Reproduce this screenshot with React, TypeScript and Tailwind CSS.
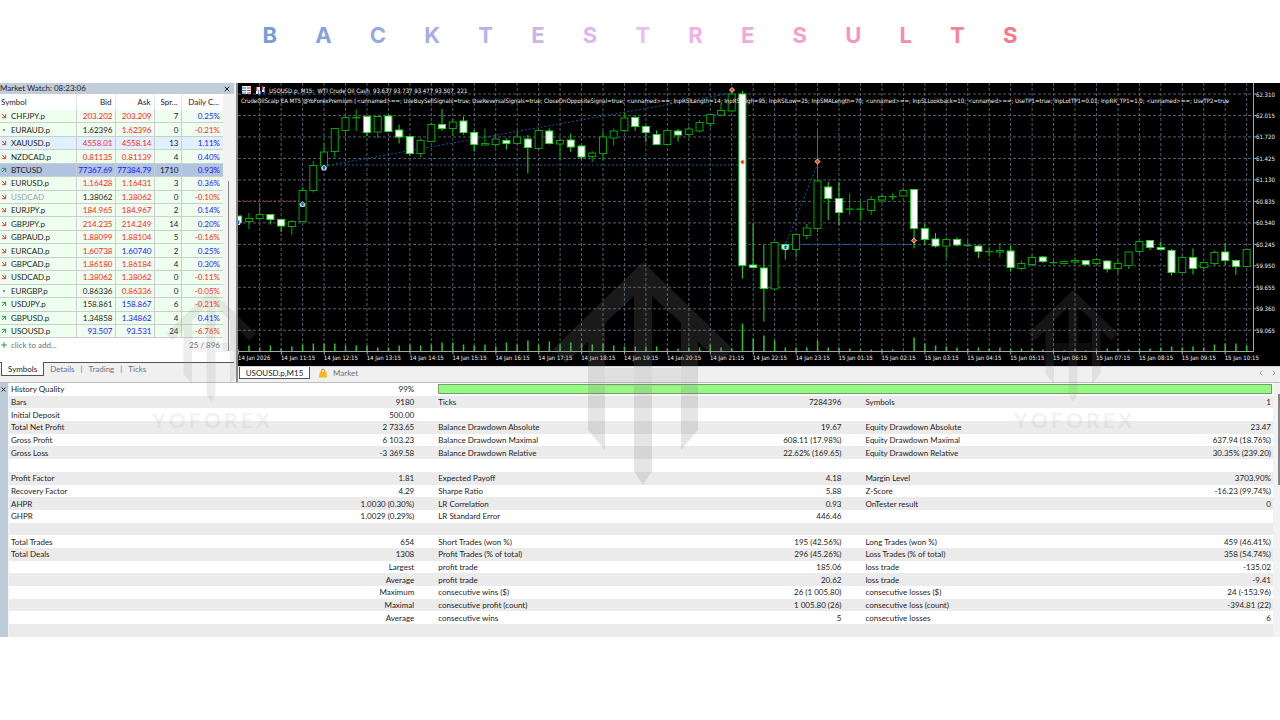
import { ArrowDownRight, ArrowUpRight, ChevronLeft, ChevronRight, Plus, X } from "lucide-react";

const titleLetters = [
  ["B", "#769ed6"],
  ["A", "#87a3da"],
  ["C", "#98a9de"],
  ["K", "#a9aee2"],
  ["T", "#bab1e6"],
  ["E", "#ccb4ea"],
  ["S", "#ddb8ee"],
  ["T", "#edbdf2"],
  ["R", "#f0b3e6"],
  ["E", "#f2a9da"],
  ["S", "#f59fcc"],
  ["U", "#f795ba"],
  ["L", "#fa8aa8"],
  ["T", "#fb8098"],
  ["S", "#fc7589"],
];

type Tone = "r" | "b" | "k";

const toneClass: Record<Tone, string> = {
  r: "text-[#ff2020]",
  b: "text-[#1515ff]",
  k: "text-[#1c1c1c]",
};

type Quote = {
  dir: "up" | "down" | "flat";
  symbol: string;
  bid: string;
  bidTone: Tone;
  ask: string;
  askTone: Tone;
  spread: string;
  change: string;
};

const quotes: Quote[] = [
  { dir: "down", symbol: "CHFJPY.p", bid: "203.202", bidTone: "r", ask: "203.209", askTone: "r", spread: "7", change: "0.25%" },
  { dir: "flat", symbol: "EURAUD.p", bid: "1.62396", bidTone: "k", ask: "1.62396", askTone: "r", spread: "0", change: "-0.21%" },
  { dir: "down", symbol: "XAUUSD.p", bid: "4558.01", bidTone: "r", ask: "4558.14", askTone: "r", spread: "13", change: "1.11%" },
  { dir: "down", symbol: "NZDCAD.p", bid: "0.81135", bidTone: "r", ask: "0.81139", askTone: "r", spread: "4", change: "0.40%" },
  { dir: "up", symbol: "BTCUSD", bid: "77367.69", bidTone: "b", ask: "77384.79", askTone: "b", spread: "1710", change: "0.93%" },
  { dir: "down", symbol: "EURUSD.p", bid: "1.16428", bidTone: "r", ask: "1.16431", askTone: "r", spread: "3", change: "0.36%" },
  { dir: "down", symbol: "USDCAD", bid: "1.38062", bidTone: "k", ask: "1.38062", askTone: "r", spread: "0", change: "-0.10%" },
  { dir: "down", symbol: "EURJPY.p", bid: "184.965", bidTone: "r", ask: "184.967", askTone: "r", spread: "2", change: "0.14%" },
  { dir: "down", symbol: "GBPJPY.p", bid: "214.235", bidTone: "r", ask: "214.249", askTone: "r", spread: "14", change: "0.20%" },
  { dir: "down", symbol: "GBPAUD.p", bid: "1.88099", bidTone: "r", ask: "1.88104", askTone: "r", spread: "5", change: "-0.16%" },
  { dir: "down", symbol: "EURCAD.p", bid: "1.60738", bidTone: "r", ask: "1.60740", askTone: "b", spread: "2", change: "0.25%" },
  { dir: "down", symbol: "GBPCAD.p", bid: "1.86180", bidTone: "r", ask: "1.86184", askTone: "r", spread: "4", change: "0.30%" },
  { dir: "down", symbol: "USDCAD.p", bid: "1.38062", bidTone: "r", ask: "1.38062", askTone: "r", spread: "0", change: "-0.11%" },
  { dir: "flat", symbol: "EURGBP.p", bid: "0.86336", bidTone: "k", ask: "0.86336", askTone: "r", spread: "0", change: "-0.05%" },
  { dir: "up", symbol: "USDJPY.p", bid: "158.861", bidTone: "k", ask: "158.867", askTone: "b", spread: "6", change: "-0.21%" },
  { dir: "up", symbol: "GBPUSD.p", bid: "1.34858", bidTone: "k", ask: "1.34862", askTone: "b", spread: "4", change: "0.41%" },
  { dir: "up", symbol: "USOUSD.p", bid: "93.507", bidTone: "b", ask: "93.531", askTone: "b", spread: "24", change: "-6.76%" },
];

// high, body top, body bottom, low (chart y), filled = bearish
type Candle = [number, number, number, number, 0 | 1];

const candles: Candle[] = [
  [133, 133, 139.5, 139.5, 1],
  [130, 135.5, 138.5, 146, 0],
  [120.5, 131.5, 135.5, 136.5, 0],
  [131.5, 131.5, 136.5, 141.5, 1],
  [136.5, 136.5, 143, 149, 1],
  [137, 138.5, 143.5, 152, 0],
  [104.5, 107.5, 138.5, 138.5, 0],
  [78, 82.5, 107.5, 109.5, 0],
  [59.5, 69, 83, 83.5, 0],
  [45.5, 45.5, 68.5, 74.5, 0],
  [33, 34.5, 47.5, 53, 0],
  [26.5, 34.5, 34.5, 48, 0],
  [33.5, 33.5, 49.5, 53, 1],
  [33.5, 33.5, 49, 55, 0],
  [31.5, 33, 48.5, 49, 1],
  [41.5, 47, 54, 60.5, 1],
  [53, 53.5, 70.5, 73, 1],
  [55.5, 57.5, 70.5, 74, 0],
  [39.5, 41.5, 58.5, 59, 0],
  [26, 41.5, 45.5, 48, 1],
  [35.5, 39, 45.5, 53, 0],
  [33.5, 38, 49.5, 51.5, 1],
  [47, 49.5, 61.5, 68.5, 1],
  [45.5, 60.5, 62, 62, 0],
  [51, 56, 61.5, 64.5, 0],
  [55.5, 57.5, 60.5, 66.5, 1],
  [48, 54, 60.5, 61.5, 0],
  [52, 56, 64.5, 90.5, 1],
  [46, 47.5, 65.5, 66.5, 0],
  [45.5, 48, 60.5, 61.5, 1],
  [56, 57.5, 61, 77, 0],
  [50.5, 57, 64, 69, 1],
  [63, 63, 74, 76.5, 1],
  [68, 70, 73.5, 79, 0],
  [48, 54, 70.5, 77, 0],
  [45.5, 48, 55, 62.5, 0],
  [29.5, 35, 47.5, 49, 0],
  [33, 34.5, 43.5, 48, 1],
  [42.5, 43.5, 49.5, 59, 1],
  [47.5, 51.5, 61.5, 61.5, 1],
  [47.5, 47.5, 61.5, 61.5, 0],
  [46, 48, 52, 58.5, 1],
  [43.5, 46, 51.5, 53.5, 0],
  [37, 39.5, 48, 49.5, 0],
  [31, 31.5, 40.5, 44.5, 0],
  [20.5, 27.5, 32, 33.5, 0],
  [11, 11, 28, 29, 0],
  [8, 11, 182.5, 195.5, 1],
  [140.5, 182, 184.5, 184.5, 1],
  [162, 185, 205.5, 238.5, 1],
  [158.5, 159.5, 206, 206.5, 0],
  [160.5, 161.5, 166, 176.5, 1],
  [151, 151.5, 166.5, 174.5, 0],
  [141, 145, 152.5, 156, 0],
  [48.5, 98, 145.5, 149, 0],
  [99, 104, 115.5, 137, 1],
  [99, 115.5, 129.5, 142, 1],
  [110, 126, 126, 132, 0],
  [119, 126, 126, 137, 0],
  [113, 116.5, 127.5, 132, 0],
  [111.5, 113.5, 117, 120, 0],
  [110.5, 113.5, 113.5, 117.5, 0],
  [104.5, 107.5, 113, 113.5, 0],
  [106.5, 106.5, 145.5, 165.5, 1],
  [141, 145.5, 156.5, 162, 1],
  [150, 156, 163, 164.5, 1],
  [154.5, 156.5, 163, 175.5, 0],
  [154.5, 156.5, 162, 163.5, 1],
  [157.5, 162.5, 162.5, 164, 0],
  [162.5, 163, 168.5, 175, 1],
  [164, 168.5, 168.5, 173.5, 0],
  [160, 167.5, 169, 174.5, 0],
  [163, 168, 184.5, 188.5, 1],
  [177.5, 180.5, 185.5, 187.5, 0],
  [172, 174.5, 181.5, 182.5, 0],
  [173, 174, 178.5, 180, 1],
  [177, 179.5, 179.5, 182.5, 0],
  [177.5, 178.5, 180.5, 181.5, 0],
  [174.5, 177.5, 179, 181.5, 0],
  [177.5, 177.5, 181.5, 182.5, 1],
  [175.5, 176.5, 180.5, 183, 0],
  [177.5, 178, 186, 189.5, 1],
  [177, 180.5, 185.5, 190.5, 0],
  [168.5, 169, 182.5, 186, 0],
  [157.5, 158.5, 168.5, 170.5, 0],
  [157, 157.5, 164.5, 167, 1],
  [158.5, 164.5, 166.5, 167.5, 1],
  [166, 167.5, 189.5, 192.5, 1],
  [172.5, 174.5, 189.5, 190, 0],
  [165.5, 174.5, 185.5, 191.5, 1],
  [178.5, 179.5, 184.5, 188.5, 0],
  [167.5, 169.5, 180.5, 182.5, 0],
  [160, 169, 177.5, 182, 1],
  [176.5, 177.5, 183.5, 192, 1],
  [166.5, 166.5, 183.5, 183.5, 0],
];

const volumes = [
  2, 6, 4, 6, 3, 5, 7, 8, 8, 8, 6, 6, 6, 4, 4, 6, 7, 6, 7, 9, 9, 7, 6, 7, 5, 9, 7, 11, 7, 10, 7, 9, 8, 7, 8, 6, 5, 5, 5, 5, 3, 3, 4,
  4, 7, 4, 3, 28, 13, 16, 11, 4, 4, 4, 11, 4, 4, 3, 2, 2, 2, 2, 1, 14, 8, 6, 5, 4, 3, 4, 3, 4, 3, 3, 3, 2, 1, 1, 2, 1, 1, 3, 3, 2, 3,
  3, 4, 5, 4, 5, 4, 7, 8, 8, 6,
];

const prices = ["62.310", "62.015", "61.720", "61.425", "61.130", "60.835", "60.540", "60.245", "59.950", "59.655", "59.360", "59.065"];

const times = [
  "14 Jan 2026", "14 Jan 11:15", "14 Jan 12:15", "14 Jan 13:15", "14 Jan 14:15", "14 Jan 15:15", "14 Jan 16:15", "14 Jan 17:15",
  "14 Jan 18:15", "14 Jan 19:15", "14 Jan 20:15", "14 Jan 21:15", "14 Jan 22:15", "14 Jan 23:15", "15 Jan 01:15", "15 Jan 02:15",
  "15 Jan 03:15", "15 Jan 04:15", "15 Jan 05:15", "15 Jan 06:15", "15 Jan 07:15", "15 Jan 08:15", "15 Jan 09:15", "15 Jan 10:15",
];

const inputsLine =
  "CrudeOilScalp EA MT5 @YoForexPremium [<unnamed>==; UseBuySellSignals=true; UseReversalSignals=true; CloseOnOppositeSignal=true; <unnamed>==; InpRSILength=14; InpRSIHigh=95; InpRSILow=25; InpSMALength=70; <unnamed>==; InpSLLookback=10; <unnamed>==; UseTP1=true; InpLotTP1=0.01; InpRR_TP1=1.0; <unnamed>==; UseTP2=true";

const STEP = 10.728;
const BASE = 268.5;
const PLOT_RIGHT = 1015;

const report: string[][] = [
  ["Bars", "9180", "Ticks", "7284396", "Symbols", "1"],
  ["Initial Deposit", "500.00", "", "", "", ""],
  ["Total Net Profit", "2 733.65", "Balance Drawdown Absolute", "19.67", "Equity Drawdown Absolute", "23.47"],
  ["Gross Profit", "6 103.23", "Balance Drawdown Maximal", "608.11 (17.98%)", "Equity Drawdown Maximal", "637.94 (18.76%)"],
  ["Gross Loss", "-3 369.58", "Balance Drawdown Relative", "22.62% (169.65)", "Equity Drawdown Relative", "30.35% (239.20)"],
  ["", "", "", "", "", ""],
  ["Profit Factor", "1.81", "Expected Payoff", "4.18", "Margin Level", "3703.90%"],
  ["Recovery Factor", "4.29", "Sharpe Ratio", "5.88", "Z-Score", "-16.23 (99.74%)"],
  ["AHPR", "1.0030 (0.30%)", "LR Correlation", "0.93", "OnTester result", "0"],
  ["GHPR", "1.0029 (0.29%)", "LR Standard Error", "446.46", "", ""],
  ["", "", "", "", "", ""],
  ["Total Trades", "654", "Short Trades (won %)", "195 (42.56%)", "Long Trades (won %)", "459 (46.41%)"],
  ["Total Deals", "1308", "Profit Trades (% of total)", "296 (45.26%)", "Loss Trades (% of total)", "358 (54.74%)"],
  ["", "Largest", "profit trade", "185.06", "loss trade", "-135.02"],
  ["", "Average", "profit trade", "20.62", "loss trade", "-9.41"],
  ["", "Maximum", "consecutive wins ($)", "26 (1 005.80)", "consecutive losses ($)", "24 (-153.96)"],
  ["", "Maximal", "consecutive profit (count)", "1 005.80 (26)", "consecutive loss (count)", "-394.81 (22)"],
  ["", "Average", "consecutive wins", "5", "consecutive losses", "6"],
  ["", "", "", "", "", ""],
];

const DirIcon = ({ dir }: { dir: Quote["dir"] }) => {
  if (dir === "up") {
    return <ArrowUpRight className="size-2 text-[#1fa040]" strokeWidth={3} />;
  }
  if (dir === "down") {
    return <ArrowDownRight className="size-2 text-[#e04038]" strokeWidth={3} />;
  }
  return <span className="mx-[3px] size-[2px] rounded-full bg-gray-500" />;
};

const rowBg = (symbol: string) => {
  if (symbol === "BTCUSD") return "bg-[#b0c3df]";
  if (symbol === "XAUUSD.p") return "bg-[#e1f0ff]";
  return "bg-[#efffef]";
};

const MarketWatch = () => (
  <aside className="flex w-[234px] shrink-0 flex-col bg-white">
    <div className="flex h-[11px] items-center justify-between bg-[#c1cdd9] pr-[3px] leading-[11px]">
      <h2>Market Watch: 08:23:06</h2>
      <button type="button" aria-label="Close Market Watch">
        <X className="size-2" strokeWidth={3} />
      </button>
    </div>
    <div className="flex">
      <table className="h-[257px] w-[223px] table-fixed border-collapse text-right leading-3">
        <colgroup>
          <col className="w-[76px]" />
          <col className="w-[39px]" />
          <col className="w-[39px]" />
          <col className="w-[27px]" />
          <col className="w-[42px]" />
        </colgroup>
        <thead>
          <tr className="h-4">
            <th className="py-0 pl-px text-left font-normal">Symbol</th>
            <th className="border-l border-gray-200 py-0 pr-[3px] font-normal">Bid</th>
            <th className="border-l border-gray-200 py-0 pr-[3px] font-normal">Ask</th>
            <th className="border-l border-gray-200 py-0 pr-[3px] font-normal">Spr...</th>
            <th className="border-l border-gray-200 py-0 pr-1 font-normal">Daily C...</th>
          </tr>
        </thead>
        <tbody>
          {quotes.map((q) => (
            <tr key={q.symbol} className={`border-b border-[#cbcfcb] ${rowBg(q.symbol)}`}>
              <td className="p-0">
                <div className="flex items-center gap-[3px]">
                  <DirIcon dir={q.dir} />
                  <span className={q.symbol === "USDCAD" ? "text-gray-400" : ""}>{q.symbol}</span>
                </div>
              </td>
              <td className={`border-l border-[#cbcfcb] py-0 pr-[2px] ${toneClass[q.bidTone]}`}>{q.bid}</td>
              <td className={`border-l border-[#cbcfcb] py-0 pr-[2px] ${toneClass[q.askTone]}`}>{q.ask}</td>
              <td className="border-l border-[#cbcfcb] py-0 pr-[2px]">{q.spread}</td>
              <td className={`border-l border-[#cbcfcb] py-0 pr-[3px] ${q.change.startsWith("-") ? toneClass.r : toneClass.b}`}>{q.change}</td>
            </tr>
          ))}
          <tr className="text-gray-500">
            <td className="p-0">
              <div className="flex items-center gap-[3px]">
                <Plus className="size-2 text-[#1fa040]" strokeWidth={3} />
                <span>click to add...</span>
              </div>
            </td>
            <td colSpan={4} className="py-0 pr-[3px]">
              25 / 896
            </td>
          </tr>
        </tbody>
      </table>
      <div className="flex flex-1 flex-col bg-[#f2f2f2] pl-[5px]">
        <div className="mt-[87px] w-px flex-1 bg-[#858585]" />
      </div>
    </div>
    <div className="h-[11px]" />
    <nav className="flex flex-1 items-start border-t border-[#555] bg-[#f0f0f0] leading-3 text-gray-500">
      <button type="button" className="-mt-px ml-px h-[14px] border border-t-0 border-[#555] bg-white px-[6px] text-[#222]">
        Symbols
      </button>
      <button type="button" className="px-[6px]">Details</button>
      <span>|</span>
      <button type="button" className="px-[6px]">Trading</button>
      <span>|</span>
      <button type="button" className="px-[6px]">Ticks</button>
    </nav>
  </aside>
);

const BuyMark = ({ x, y }: { x: number; y: number }) => (
  <g>
    <path d={`M${x} ${y - 3}l3 3-1 3h-4l-1-3z`} fill="#c4d6e8" />
    <path d={`M${x} ${y - 2}l2 2h-1v2h-2v-2h-1z`} fill="#1565c0" />
  </g>
);

const SellMark = ({ x, y }: { x: number; y: number }) => (
  <g>
    <path d={`M${x} ${y - 3}l3 3-3 3-3-3z`} fill="#f4cec4" />
    <path d={`M${x} ${y - 2}l2 2-2 2-2-2z`} fill="#e8401c" />
  </g>
);

const Chart = () => (
  <svg viewBox="0 0 1042 283" className="block w-full bg-black font-['DejaVu_Sans_Condensed','Open_Sans',sans-serif] text-[6px]" role="img" aria-label="USOUSD.p, M15">
    <defs>
      <clipPath id="plot">
        <rect x="0" y="0" width={PLOT_RIGHT} height="283" />
      </clipPath>
    </defs>

    <g stroke="#66788a" strokeWidth="1" strokeDasharray="3 2" opacity="0.8">
      {prices.map((p, i) => (
        <line key={p} x1="0" x2={PLOT_RIGHT} y1={11 + i * 21.48} y2={11 + i * 21.48} />
      ))}
      {Array.from({ length: 47 }, (_, i) => (
        <line key={i} x1={21.7 + i * 21.456} x2={21.7 + i * 21.456} y1="0" y2={BASE} />
      ))}
    </g>

    <g fill="none" strokeWidth="1" strokeDasharray="2 2">
      <path d="M0 118h64" stroke="#c02a18" />
      <path d="M86 83L494 10M86 82h418M548 160L580 80M548 161.5h128" stroke="#0d5a9c" />
    </g>

    <g clipPath="url(#plot)">
      {volumes.map((v, i) => (
        <rect key={i} x={i * STEP - 0.5} y={BASE - v} width="1.5" height={v} fill="#2fc42f" />
      ))}
      {candles.map(([high, top, bottom, low, filled], i) => {
        const x = 0.2 + i * STEP;
        return (
          <g key={i} stroke={filled ? "#1fe01f" : "#00a800"} strokeWidth="1">
            <line x1={x} x2={x} y1={high} y2={low} />
            <rect x={x - 3.5} y={top} width="7" height={Math.max(bottom - top, 0.3)} fill={filled ? "#fff" : "#000"} />
          </g>
        );
      })}
    </g>

    <BuyMark x={0} y={139} />
    <BuyMark x={64.5} y={121} />
    <BuyMark x={86} y={84.5} />
    <BuyMark x={547.5} y={164} />
    <SellMark x={494} y={7} />
    <SellMark x={504.5} y={79} />
    <SellMark x={579.5} y={78.5} />
    <SellMark x={676} y={157.5} />

    <path d={`M${PLOT_RIGHT + 0.5} 0V${BASE}M0 ${BASE}H${PLOT_RIGHT + 1}`} stroke="#a8a8a8" strokeWidth="1" />

    <g>
      <rect x="4" y="3" width="9" height="8" fill="#e8eef4" />
      <path d="M4 5h4M4 7.5h4M4 10h4" stroke="#3478bd" />
      <path d="M9 5h4M9 7.5h4M9 10h4" stroke="#d2483c" />
      <path d="M18 4h4v7h-4zM24 4h3v5h-3z" fill="#e8eef4" />
      <path d="M18.5 4v4M24.5 3v4" stroke="#d2483c" strokeWidth="1.5" />
      <path d="M20.5 7v4M22.5 8v3M26.5 5v5" stroke="#3f8bd0" />
    </g>

    <g fill="#f2f2f2">
      <text x="31" y="9.5">USOUSD.p, M15:&nbsp; WTI Crude Oil Cash&nbsp; 93.637 93.737 93.477 93.507&nbsp; 221</text>
      <text x="3" y="19.5" clipPath="url(#plot)">{inputsLine}</text>
      {prices.map((p, i) => (
        <g key={p}>
          <path d={`M${PLOT_RIGHT} ${11 + i * 21.48}h3`} stroke="#a8a8a8" />
          <text x="1018" y={13.5 + i * 21.48}>{p}</text>
        </g>
      ))}
      {times.map((t, i) => (
        <g key={t}>
          <path d={`M${0.5 + i * 42.9} ${BASE}v3`} stroke="#a8a8a8" />
          <text x={i * 42.9} y="276.5">{t}</text>
        </g>
      ))}
    </g>
  </svg>
);

const ChartTabs = () => (
  <nav className="flex h-[16px] items-start border-t border-gray-300 bg-[#f0f0f0] text-gray-500">
    <button type="button" className="ml-px h-[12px] w-[71px] border border-t-0 border-[#555] bg-white leading-[10px] text-[#222]">
      USOUSD.p,M15
    </button>
    <button type="button" className="ml-[9px] flex items-center gap-[6px] leading-3">
      <svg viewBox="0 0 8 10" className="h-[10px] w-2">
        <path d="M2.5 4V2.5a1.5 1.5 0 0 1 3 0V4" fill="none" stroke="#b98a1c" />
        <path d="M.8 3.5h6.4L8 9.5H0z" fill="#f5b90f" />
      </svg>
      Market
    </button>
    <div className="ml-auto flex gap-[5px] pt-[2px] pr-[2px] text-gray-400">
      <button type="button" aria-label="Previous tab">
        <ChevronLeft className="size-2" strokeWidth={3} />
      </button>
      <button type="button" aria-label="Next tab">
        <ChevronRight className="size-2" strokeWidth={3} />
      </button>
    </div>
  </nav>
);

const Report = () => (
  <section className="flex border-t border-[#bdbdbd] bg-[#f2f2f2]">
    <div className="w-2 bg-[#becbd9] pt-[3px]">
      <button type="button" aria-label="Close report" className="block">
        <X className="size-[7px]" strokeWidth={3} />
      </button>
    </div>
    <table className="ml-px h-[254px] flex-1 table-fixed border-collapse bg-white leading-3">
      <colgroup>
        <col className="w-[16.9%]" />
        <col className="w-[16.9%]" />
        <col className="w-[16.9%]" />
        <col className="w-[16.9%]" />
        <col />
        <col />
      </colgroup>
      <tbody>
        <tr className="h-3">
          <td className="py-0 pl-[2px]">History Quality</td>
          <td className="py-0 pr-[22px] text-right">99%</td>
          <td colSpan={4} className="py-0 pr-px pl-[2px]">
            <div className="h-[10px] border border-[#7a9a72] bg-[#96fa82]" />
          </td>
        </tr>
        {report.map((cells, i) => (
          <tr key={i} className="h-3 odd:bg-white even:bg-[#ebebeb]">
            <td className="py-0 pl-[2px]">{cells[0]}</td>
            <td className="py-0 pr-[22px] text-right">{cells[1]}</td>
            <td className="py-0 pl-[2px]">{cells[2]}</td>
            <td className="py-0 pr-[22px] text-right">{cells[3]}</td>
            <td className="py-0 pl-[2px]">{cells[4]}</td>
            <td className="py-0 pr-[2px] text-right">{cells[5]}</td>
          </tr>
        ))}
      </tbody>
    </table>
    <div className="flex w-[7px] justify-end pt-[11px]">
      <div className="h-[91px] w-[2px] bg-[#858585]" />
    </div>
  </section>
);

const LogoMark = ({ className }: { className: string }) => (
  <svg viewBox="0 0 180 223" className={className} fill="currentColor">
    <path d="M90 0L180 87 167 101 145 80V168L128 188V61L99 34V209L90 223 81 209V34L52 61V188L35 168V80L13 101 0 87z" />
    <path d="M52 106h29v18H52zM99 106h29v18H99z" opacity="0.7" />
  </svg>
);

const Watermark = () => (
  <div className="flex w-[118px] flex-col items-center text-[#8c8c8c]">
    <LogoMark className="w-[90px] opacity-15" />
    <div className="mt-2 flex w-full justify-between text-[21px] leading-5 font-bold opacity-10">
      {"YOFOREX".split("").map((c, i) => (
        <span key={i}>{c}</span>
      ))}
    </div>
  </div>
);

export default function App() {
  return (
    <div className="min-h-screen bg-white font-['Lato','Open_Sans',sans-serif] text-[8px] text-[#1c1c1c]">
      <header className="flex h-[83px] items-start justify-center pt-5">
        <h1 className="flex w-[59%] justify-between font-['Inter',sans-serif] text-[22px] leading-[30px] font-bold">
          {titleLetters.map(([letter, color], i) => (
            <span key={i} style={{ color }}>
              {letter}
            </span>
          ))}
        </h1>
      </header>

      <main className="relative">
        <div className="flex bg-[#f0f0f0]">
          <MarketWatch />
          <div className="ml-[2px] min-w-0 flex-1 border-l-2 border-[#8a8a8a]">
            <Chart />
            <ChartTabs />
          </div>
        </div>
        <Report />

        <div className="pointer-events-none absolute inset-0">
          <div className="absolute top-[207px] left-[152px]">
            <Watermark />
          </div>
          <div className="absolute top-[179px] left-1/2 -translate-x-1/2 pl-[6px] text-[#828282]">
            <LogoMark className="w-[180px] opacity-20" />
          </div>
          <div className="absolute top-[207px] right-[148px]">
            <Watermark />
          </div>
        </div>
      </main>
    </div>
  );
}
